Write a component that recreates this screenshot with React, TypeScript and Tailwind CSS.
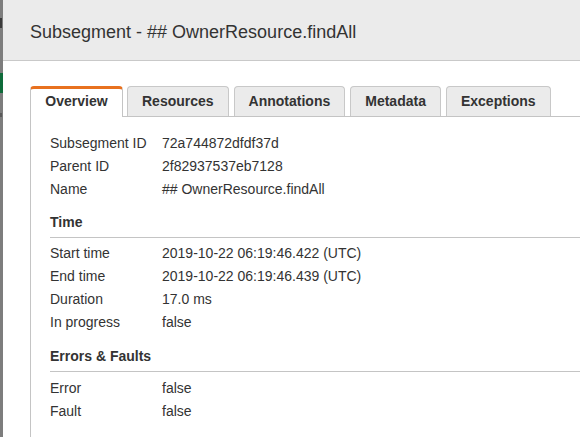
import React from "react";

const font = { fontFamily: '"Liberation Sans", Arial, Helvetica, sans-serif' };

function Row({ label, value }: { label: string; value: string }) {
  return (
    <div className="flex h-[23px] items-center text-[14px] text-[#333]">
      <div className="w-[112px] shrink-0">{label}</div>
      <div>{value}</div>
    </div>
  );
}

const tabs = ["Resources", "Annotations", "Metadata", "Exceptions"];

export default function App() {
  return (
    <div className="flex h-[437px] w-[580px] overflow-hidden bg-white" style={font}>
      <div className="flex w-[3px] shrink-0 flex-col bg-[#7d7d7d]">
        <div className="mt-[18px] h-[10px] w-[2px] bg-[#3a3a3a]" />
        <div className="mt-[45px] h-[20px] w-[3px] bg-[#0f6b3a]" />
        <div className="mt-[20px] h-[4px] w-[2px] bg-[#5a5a5a]" />
      </div>
      <div className="flex min-w-0 flex-1 flex-col">
        <div className="flex h-[61px] shrink-0 items-center border-b border-[#c9c9c9] bg-[#ebebeb] pl-[27px] pt-[4px]">
          <span className="text-[18px] text-[#333]">Subsegment - ## OwnerResource.findAll</span>
        </div>
        <div className="flex flex-1 flex-col pl-[27px] pt-[25px]">
          <div className="flex h-[31px] items-end">
            <div className="flex h-[31px] w-[93px] items-center justify-center rounded-t-[4px] border-x border-t-[3px] border-x-[#c4c4c4] border-t-[#e8711f] bg-white pb-[3px] text-[14px] font-bold text-[#333]">
              Overview
            </div>
            <div className="flex h-full flex-1 items-end gap-[5px] border-b border-[#c4c4c4] pl-[4px]">
              {tabs.map((t) => (
                <div
                  key={t}
                  className="flex h-[30px] items-center rounded-t-[4px] border-x border-t border-[#c8c8c8] bg-[#ebebeb] px-[14px] text-[14px] font-bold text-[#333]"
                >
                  {t}
                </div>
              ))}
            </div>
          </div>
          <div className="flex-1 border-l border-[#c4c4c4] pl-[19px] pt-[15px]">
            <Row label="Subsegment ID" value="72a744872dfdf37d" />
            <Row label="Parent ID" value="2f82937537eb7128" />
            <Row label="Name" value="## OwnerResource.findAll" />
            <div className="mt-[11px] h-[26px] border-b border-[#c4c4c4] text-[14px] font-bold leading-[20px] text-[#333]">
              Time
            </div>
            <div className="mt-[4px]">
              <Row label="Start time" value="2019-10-22 06:19:46.422 (UTC)" />
              <Row label="End time" value="2019-10-22 06:19:46.439 (UTC)" />
              <Row label="Duration" value="17.0 ms" />
              <Row label="In progress" value="false" />
            </div>
            <div className="mt-[11px] h-[27px] border-b border-[#c4c4c4] pt-[1px] text-[14px] font-bold leading-[20px] text-[#333]">
              Errors &amp; Faults
            </div>
            <div className="mt-[5px]">
              <Row label="Error" value="false" />
              <Row label="Fault" value="false" />
            </div>
          </div>
        </div>
      </div>
    </div>
  );
}
